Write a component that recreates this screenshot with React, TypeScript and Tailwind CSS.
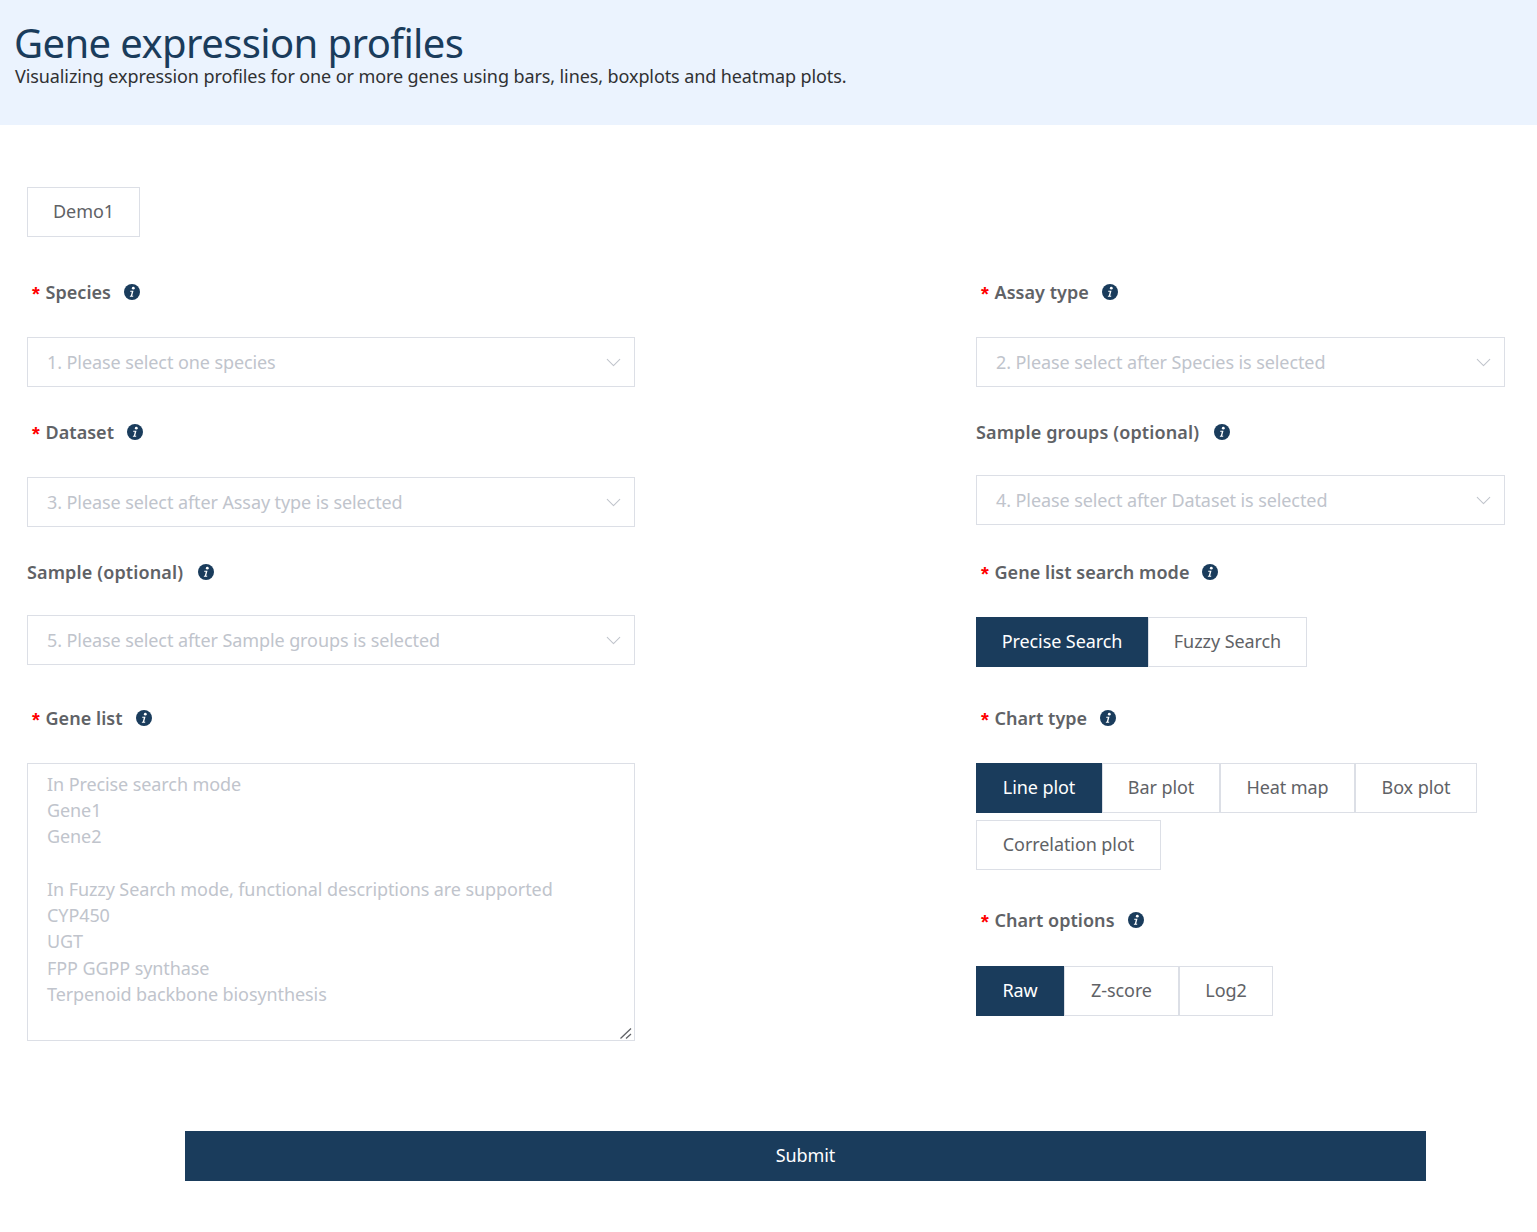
import { ChevronDown } from 'lucide-react';

const FONT = "font-['Noto_Sans','Noto_Sans_CJK_SC',sans-serif]";

function InfoIcon() {
  return (
    <svg width="16" height="16" viewBox="0 0 16 16" className="shrink-0">
      <circle cx="8" cy="8" r="8" fill="#1a3c5c" />
      <circle cx="9.3" cy="4.2" r="1.4" fill="#fff" />
      <path d="M6.3 6.8h3.2l-1.3 5h1.1l-.2.9H5.8l.2-.9h.8l1-4.1h-1.7z" fill="#fff" />
    </svg>
  );
}

function Label({ text, required }: { text: string; required?: boolean }) {
  return (
    <div className="h-[30px] flex items-center">
      {required && <span className="ml-[5px] w-[13.5px] pt-[3px] text-[20px] leading-none font-bold text-[#ff0000] font-['Liberation_Sans',sans-serif]">*</span>}
      <span className={`text-[18px] font-semibold text-[#606266] ${required ? 'tracking-[0.04px] mr-[13px]' : 'tracking-[0.13px] mr-[15px]'}`}>{text}</span>
      <InfoIcon />
    </div>
  );
}

function Select({ text, className }: { text: string; className: string }) {
  return (
    <div className={`h-[50px] border border-[#dcdfe6] bg-white flex items-center justify-between pl-[19px] pr-[8px] ${className}`}>
      <span className="text-[18px] text-[#c0c4cc] tracking-[-0.09px]">{text}</span>
      <ChevronDown size={25} strokeWidth={1} className="text-[#c0c4cc]" />
    </div>
  );
}

function Btn({ text, active, className = '' }: { text: string; active?: boolean; className?: string }) {
  return (
    <button
      className={`h-[50px] pb-[2px] text-[18px] tracking-[-0.08px] border ${active ? 'bg-[#1a3c5c] border-[#1a3c5c] text-white' : 'bg-white border-[#dcdfe6] text-[#606266]'} ${className}`}
    >
      {text}
    </button>
  );
}

const PLACEHOLDER = `In Precise search mode
Gene1
Gene2

In Fuzzy Search mode, functional descriptions are supported
CYP450
UGT
FPP GGPP synthase
Terpenoid backbone biosynthesis`;

export default function App() {
  return (
    <div className={`${FONT} bg-white h-[1232px]`}>
      <div className="h-[125px] bg-[#ebf3fe] pt-[20px] pl-[14px]">
        <h1 className="text-[40px] leading-[46px] text-[#1a3c5c] tracking-[-0.6px]">Gene expression profiles</h1>
        <p className="pl-px text-[18px] leading-[20px] text-[#303133] tracking-[-0.1px]">
          Visualizing expression profiles for one or more genes using bars, lines, boxplots and heatmap plots.
        </p>
      </div>

      <div className="pt-[62px] pl-[27px]">
        <Btn text="Demo1" className="w-[113px]" />
      </div>

      <div className="mt-[40px] pl-[27px] pr-[32px] flex justify-between">
        <div className="w-[608px] flex flex-col">
          <Label text="Species" required />
          <Select text="1. Please select one species" className="mt-[30px]" />
          <div className="mt-[30px]"><Label text="Dataset" required /></div>
          <Select text="3. Please select after Assay type is selected" className="mt-[30px]" />
          <div className="mt-[30px]"><Label text="Sample (optional)" /></div>
          <Select text="5. Please select after Sample groups is selected" className="mt-[28px]" />
          <div className="mt-[38px]"><Label text="Gene list" required /></div>
          <div className="relative mt-[30px] h-[278px]">
            <textarea
              readOnly
              placeholder={PLACEHOLDER}
              className="w-full h-full border border-[#dcdfe6] px-[19px] pt-[6.9px] pb-[7px] text-[18px] leading-[26.25px] tracking-[-0.09px] outline-none placeholder:text-[#c0c4cc] resize-none"
            />
            <svg width="12" height="11" viewBox="0 0 12 11" className="absolute right-[3px] bottom-[2px]">
              <path d="M0.5 10.5 11 0.5M6 10.5 11 6" stroke="#606266" strokeWidth="1.3" fill="none" />
            </svg>
          </div>
        </div>

        <div className="w-[529px] flex flex-col">
          <Label text="Assay type" required />
          <Select text="2. Please select after Species is selected" className="mt-[30px]" />
          <div className="mt-[30px]"><Label text="Sample groups (optional)" /></div>
          <Select text="4. Please select after Dataset is selected" className="mt-[28px]" />
          <div className="mt-[32px]"><Label text="Gene list search mode" required /></div>
          <div className="mt-[30px] flex">
            <Btn text="Precise Search" active className="w-[172px]" />
            <Btn text="Fuzzy Search" className="w-[159px]" />
          </div>
          <div className="mt-[36px]"><Label text="Chart type" required /></div>
          <div className="mt-[30px] flex flex-wrap gap-y-[7px]">
            <Btn text="Line plot" active className="w-[126px]" />
            <Btn text="Bar plot" className="w-[118px]" />
            <Btn text="Heat map" className="w-[135px]" />
            <Btn text="Box plot" className="w-[122px]" />
            <Btn text="Correlation plot" className="w-[185px]" />
          </div>
          <div className="mt-[35px]"><Label text="Chart options" required /></div>
          <div className="mt-[31px] flex">
            <Btn text="Raw" active className="w-[88px]" />
            <Btn text="Z-score" className="w-[115px]" />
            <Btn text="Log2" className="w-[94px]" />
          </div>
        </div>
      </div>

      <div className="mt-[90px] pl-[185px]">
        <button className="w-[1241px] h-[50px] pb-[2px] bg-[#1a3c5c] text-white text-[18px] tracking-[-0.08px]">Submit</button>
      </div>
    </div>
  );
}
